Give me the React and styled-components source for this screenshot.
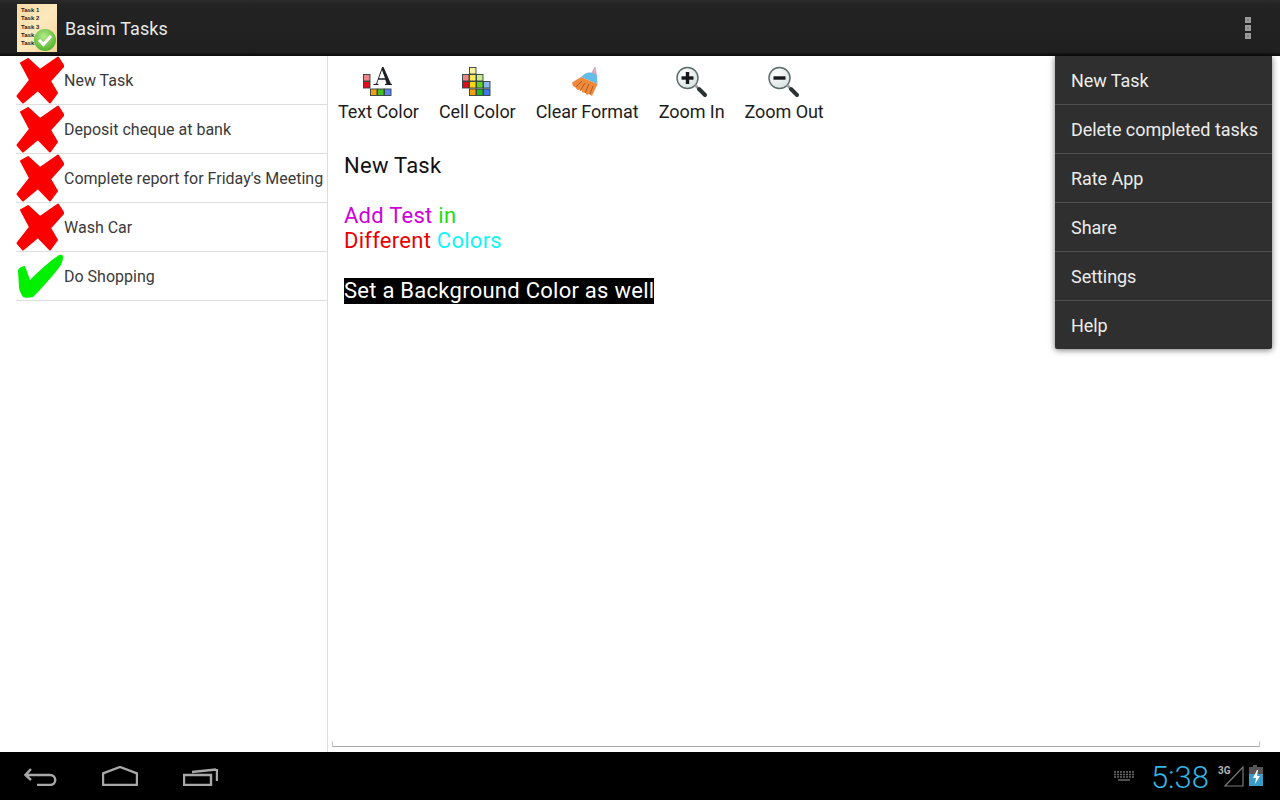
import React from 'react';
import styled, { createGlobalStyle } from 'styled-components';

const GlobalStyle = createGlobalStyle`
  html, body { margin: 0; padding: 0; background: #fff; }
  body { font-family: Roboto, "Liberation Sans", sans-serif; }
`;

const Screen = styled.div`
  position: relative;
  width: 1280px;
  height: 800px;
  overflow: hidden;
  display: flex;
  flex-direction: column;
  background: #fff;
`;

const ActionBar = styled.header`
  flex: none;
  height: 56px;
  box-sizing: border-box;
  padding: 4px 29px 4px 17px;
  display: flex;
  align-items: center;
  background: linear-gradient(#2c2c2c 0, #232323 4px, #202020 52px, #0e0e0e 55px);
`;

const Title = styled.h1`
  margin: 0 0 0 8px;
  flex: 1;
  font-size: 18px;
  font-weight: 400;
  letter-spacing: 0.1px;
  color: #e8e8e8;
`;

const Main = styled.main`
  flex: 1;
  min-height: 0;
  display: flex;
`;

const TaskList = styled.ul`
  flex: none;
  width: 328px;
  box-sizing: border-box;
  margin: 0;
  padding: 0 0 0 16px;
  list-style: none;
  border-right: 1px solid #dcdcdc;
`;

const TaskRow = styled.li`
  height: 49px;
  box-sizing: border-box;
  display: flex;
  align-items: center;
  border-bottom: 1px solid #dedede;
  font-size: 16px;
  color: #3a3a3a;
  white-space: nowrap;
`;

const Mark = styled.svg`
  flex: none;
  width: 48px;
  height: 48px;
`;

const Editor = styled.section`
  flex: 1;
  min-width: 0;
  display: flex;
  flex-direction: column;
`;

const Toolbar = styled.div`
  flex: none;
  display: flex;
  gap: 20px;
  padding: 10px 0 0 10px;
`;

const ToolButton = styled.div`
  display: flex;
  flex-direction: column;
  align-items: center;
  gap: 2px;
  font-size: 18px;
  line-height: 24px;
  letter-spacing: -0.05px;
  color: #1c1c1c;
`;

const ToolIcon = styled.svg`
  width: 32px;
  height: 32px;
`;

const Document = styled.div`
  flex: 1;
  padding: 29px 0 0 16px;
  font-size: 22px;
  line-height: 25px;
  color: #111;
  letter-spacing: 0.26px;
`;

const Para = styled.p`
  margin: 0 0 25px;
`;

const Tint = styled.span`
  color: ${({ $color }) => $color};
`;

const Highlight = styled.span`
  display: inline-block;
  background: #000;
  color: #fff;
  line-height: 26px;
`;

const Ruler = styled.div`
  flex: none;
  height: 5px;
  margin: 0 20px 5px 4px;
  border: 1px solid #a8a8a8;
  border-top: 0;
  border-left-color: #c8c8c8;
  border-right-color: #c8c8c8;
`;

const Menu = styled.ul`
  position: absolute;
  top: 56px;
  left: 1055px;
  width: 217px;
  margin: 0;
  padding: 0;
  list-style: none;
  background: #2f2f2f;
  border-radius: 0 0 2px 2px;
  box-shadow: 0 1px 6px rgba(0, 0, 0, 0.55);
`;

const MenuRow = styled.li`
  height: 49px;
  box-sizing: border-box;
  padding-left: 16px;
  display: flex;
  align-items: center;
  font-size: 18px;
  letter-spacing: -0.05px;
  color: #ececec;
  border-bottom: 1px solid #505050;
  white-space: nowrap;

  &:last-child {
    height: 48px;
    border-bottom: 0;
  }
`;

const NavBar = styled.footer`
  flex: none;
  height: 48px;
  box-sizing: border-box;
  padding: 0 16px 0 24px;
  display: flex;
  align-items: center;
  background: #000;
`;

const NavKeys = styled.div`
  flex: 1;
  display: flex;
  align-items: center;
  gap: 45px;
`;

const NavIcon = styled.svg`
  display: block;
  fill: none;
  stroke: #a8a8a8;
  stroke-width: 2.4;
`;

const Clock = styled.time`
  margin: 3px 9px 0 17px;
  font-size: 31px;
  line-height: 44px;
  font-weight: 300;
  color: #33b5e5;
`;

const tasks = [
  { label: 'New Task' },
  { label: 'Deposit cheque at bank' },
  { label: "Complete report for Friday's Meeting" },
  { label: 'Wash Car' },
  { label: 'Do Shopping', done: true },
];

const menuItems = ['New Task', 'Delete completed tasks', 'Rate App', 'Share', 'Settings', 'Help'];

const AppLogo = () => (
  <svg width="40" height="48" viewBox="0 0 40 48">
    <defs>
      <linearGradient id="paper" x1="0" y1="0" x2="1" y2="1">
        <stop offset="0" stopColor="#f8d9a4" />
        <stop offset="0.5" stopColor="#fde9bd" />
        <stop offset="1" stopColor="#f6d49b" />
      </linearGradient>
      <radialGradient id="tick" cx="0.45" cy="0.35" r="0.75">
        <stop offset="0" stopColor="#b6ea8a" />
        <stop offset="1" stopColor="#43ab1e" />
      </radialGradient>
    </defs>
    <rect width="40" height="48" fill="url(#paper)" />
    <g fontFamily="Liberation Sans, sans-serif" fontSize="6" fontWeight="700" fill="#2a2218">
      <text x="4" y="8">Task 1</text>
      <text x="4" y="16">Task 2</text>
      <text x="4" y="25">Task 3</text>
      <text x="4" y="33">Task</text>
      <text x="4" y="41">Task</text>
    </g>
    <circle cx="28" cy="36" r="11" fill="url(#tick)" />
    <path d="M22 36l4.500 4.500 7.500-8.500" fill="none" stroke="#fff" strokeWidth="3" />
  </svg>
);

const CrossMark = () => (
  <Mark viewBox="0 0 48 48">
    <path
      d="M5 7 L12 3 L24 14 L42 1.500 L47.500 10 L34 25 L41 37 L34 46.500 L22 34 L7 46.500 L1.500 40 L14 24 Z"
      fill="#fb0000"
      stroke="#fb0000"
      strokeWidth="2"
      strokeLinejoin="round"
    />
  </Mark>
);

const CheckMark = () => (
  <Mark viewBox="0 0 48 48">
    <path
      d="M2 18 C4 15 7 14 9 14 L14 28 C24 18 34 9 43 3 C46 2 48 4 47 6 C46 13 44 14 42 17 C34 27 25 37 17 45 C13 46 9 46 7 45 C5 42 3 38 3 35 Z"
      fill="#00f000"
    />
  </Mark>
);

const Grid = ({ cells }) => (
  <>
    {cells.map(([x, y, color]) => (
      <rect key={`${x}-${y}`} x={x} y={y} width="6.500" height="6.500" fill={color} stroke="#2f3f44" strokeWidth="0.9" />
    ))}
  </>
);

const TextColorIcon = () => (
  <ToolIcon viewBox="0 0 32 32">
    <Grid
      cells={[
        [1.500, 8.500, '#ee8585'],
        [1.500, 15.500, '#e30c1c'],
        [8.500, 23, '#f5a10c'],
        [15.500, 23, '#44c01c'],
        [22.500, 23, '#5d86e6'],
      ]}
    />
    <path d="M11.500 19h5v-1l-1.400-.3 1.200-3.900h7l1.200 3.900-1.500.3v1h7v-1l-1.100-.3L21.500 1h-1.400l-6 16.700-2.600.3zM17 12.300l3-8.300 3 8.300z" fill="#1d2024" />
  </ToolIcon>
);

const CellColorIcon = () => (
  <ToolIcon viewBox="0 0 32 32">
    <Grid
      cells={[
        [8.500, 1.500, '#fbf29a'],
        [1.500, 8.500, '#ee8585'],
        [8.500, 8.500, '#fbe95a'],
        [15.500, 8.500, '#c8ec8e'],
        [1.500, 15.500, '#e30c1c'],
        [8.500, 15.500, '#f8d80c'],
        [15.500, 15.500, '#66d022'],
        [22.500, 15.500, '#8ab6f2'],
        [8.500, 23, '#f5a10c'],
        [15.500, 23, '#22b81c'],
        [22.500, 23, '#3d76e6'],
      ]}
    />
  </ToolIcon>
);

const BroomIcon = () => (
  <ToolIcon viewBox="0 0 32 32">
    <path d="M24 1l1.500 8-5-1.500z" fill="#e9a4b4" stroke="#b99aa6" strokeWidth="0.6" />
    <path d="M10 11c3-3 6-5 9-4.500 4 .5 7 2 7 3.500l.5 8z" fill="#63bde8" />
    <path d="M10 11l16.500 7-5.500 12-3-2-2 1-2-2.500-2.500 0-1.500-3-3.500.5-2-2.500-2.500-1.500-1-3.500z" fill="#ee8a3c" />
    <path d="M11 15l-6 6M14 17l-5 8M18 18l-4 9M22 20l-3 8" stroke="#b95a1c" strokeWidth="1" />
  </ToolIcon>
);

const ZoomIcon = ({ plus }) => (
  <ToolIcon viewBox="0 0 32 32">
    <defs>
      <radialGradient id="lens" cx="0.35" cy="0.3" r="0.8">
        <stop offset="0" stopColor="#ffffff" />
        <stop offset="1" stopColor="#d6e2e0" />
      </radialGradient>
    </defs>
    <circle cx="11.500" cy="12" r="10.500" fill="url(#lens)" stroke="#5c6a6a" strokeWidth="1.400" />
    <rect x="5.500" y="10.300" width="12" height="3.400" fill="#16191b" />
    {plus && <rect x="9.800" y="6" width="3.400" height="12" fill="#16191b" />}
    <path d="M19 19l3 3" stroke="#9a9f9f" strokeWidth="2.500" />
    <path d="M23 23l6 6" stroke="#2c3234" strokeWidth="4" strokeLinecap="round" />
  </ToolIcon>
);

const tools = [
  { label: 'Text Color', icon: <TextColorIcon /> },
  { label: 'Cell Color', icon: <CellColorIcon /> },
  { label: 'Clear Format', icon: <BroomIcon /> },
  { label: 'Zoom In', icon: <ZoomIcon plus /> },
  { label: 'Zoom Out', icon: <ZoomIcon /> },
];

const App = () => (
  <Screen>
    <GlobalStyle />
    <ActionBar>
      <AppLogo />
      <Title>Basim Tasks</Title>
      <svg width="6" height="22" viewBox="0 0 6 22">
        <path d="M0 0h6v6H0zM0 8h6v6H0zM0 16h6v6H0z" fill="#9a9a9a" />
        <path d="M2 2h2v2H2zM2 10h2v2H2zM2 18h2v2H2z" fill="#808080" />
      </svg>
    </ActionBar>

    <Main>
      <TaskList>
        {tasks.map((task) => (
          <TaskRow key={task.label}>
            {task.done ? <CheckMark /> : <CrossMark />}
            {task.label}
          </TaskRow>
        ))}
      </TaskList>

      <Editor>
        <Toolbar>
          {tools.map((tool) => (
            <ToolButton key={tool.label}>
              {tool.icon}
              {tool.label}
            </ToolButton>
          ))}
        </Toolbar>
        <Document>
          <Para>New Task</Para>
          <Para>
            <Tint $color="#d000d8">Add Test</Tint> <Tint $color="#22dd11">in</Tint>
            <br />
            <Tint $color="#e80000">Different</Tint> <Tint $color="#11f5f5">Colors</Tint>
          </Para>
          <Para>
            <Highlight>Set a Background Color as well</Highlight>
          </Para>
        </Document>
        <Ruler />
      </Editor>
    </Main>

    <NavBar>
      <NavKeys>
        <NavIcon width="33" height="20" viewBox="0 0 33 20">
          <path d="M7 3L1.500 9 7 14M2 9h24c7 0 7 10 0 10H13" />
        </NavIcon>
        <NavIcon width="36" height="20" viewBox="0 0 36 20">
          <path d="M1 19V7.500L18 1l17 6.500V19z" />
        </NavIcon>
        <NavIcon width="35" height="20" viewBox="0 0 35 20">
          <path d="M1 9h27v10H1zM9 6l24-2.500M34 3v12" />
        </NavIcon>
      </NavKeys>
      <svg width="20" height="10" viewBox="0 0 20 10">
        <path d="M0 1h20M0 3.500h20M0 6h20" stroke="#6a6a6a" strokeWidth="1.500" strokeDasharray="2 1" />
        <path d="M4 9h12" stroke="#6a6a6a" strokeWidth="1.500" />
      </svg>
      <Clock>5:38</Clock>
      <svg width="46" height="24" viewBox="0 0 46 24">
        <text x="0" y="10" fontFamily="Roboto, sans-serif" fontSize="10" fontWeight="700" fill="#b4b4b4">3G</text>
        <path d="M7 22L25 3v19z" fill="none" stroke="#7a7a7a" strokeWidth="1.200" />
        <rect x="35" y="1" width="4" height="3" fill="#555" />
        <rect x="31" y="3" width="14" height="7" fill="#555" />
        <rect x="31" y="10" width="14" height="12" fill="#3a9cc4" />
        <path d="M39 6l-4 8h3l-1 6 5-8h-3l1-6z" fill="#fff" />
      </svg>
    </NavBar>

    <Menu>
      {menuItems.map((item) => (
        <MenuRow key={item}>{item}</MenuRow>
      ))}
    </Menu>
  </Screen>
);

export default App;
